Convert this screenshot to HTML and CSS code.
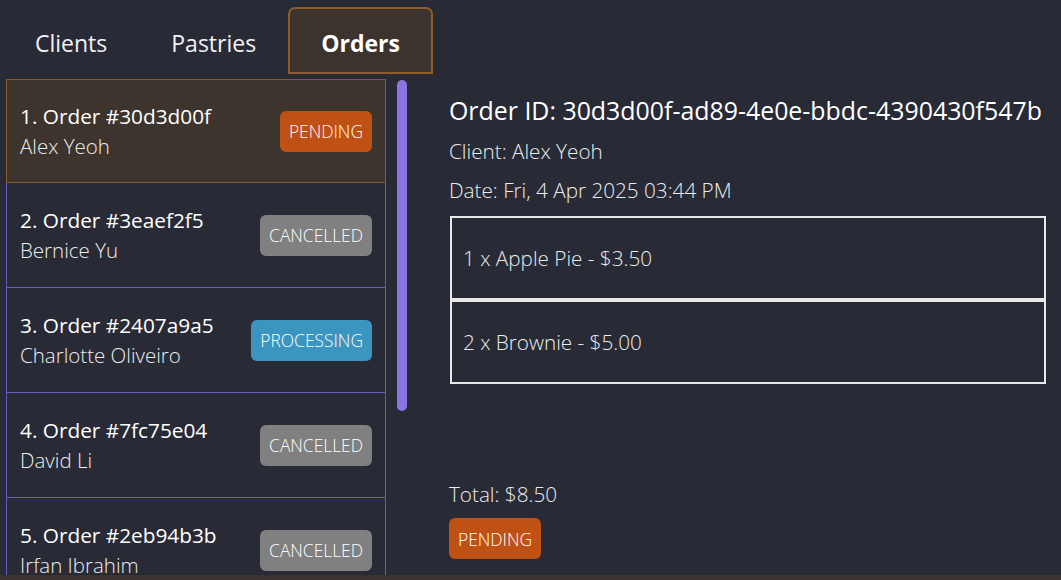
FILE: index.html
```html
<!DOCTYPE html>
<html>
<head>
<meta charset="utf-8">
<link rel="stylesheet" href="styles.css">
</head>
<body>
<div class="app">
  <div class="tabs">
    <div class="tab">Clients</div>
    <div class="tab">Pastries</div>
    <div class="tab active">Orders</div>
  </div>
  <div class="main">
    <div class="left">
      <div class="list">
        <div class="item selected">
          <div class="info"><div class="title">1. Order #30d3d00f</div><div class="sub">Alex Yeoh</div></div>
          <span class="badge pending">PENDING</span>
        </div>
        <div class="item">
          <div class="info"><div class="title">2. Order #3eaef2f5</div><div class="sub">Bernice Yu</div></div>
          <span class="badge cancelled">CANCELLED</span>
        </div>
        <div class="item">
          <div class="info"><div class="title">3. Order #2407a9a5</div><div class="sub">Charlotte Oliveiro</div></div>
          <span class="badge processing">PROCESSING</span>
        </div>
        <div class="item">
          <div class="info"><div class="title">4. Order #7fc75e04</div><div class="sub">David Li</div></div>
          <span class="badge cancelled">CANCELLED</span>
        </div>
        <div class="item">
          <div class="info"><div class="title">5. Order #2eb94b3b</div><div class="sub">Irfan Ibrahim</div></div>
          <span class="badge cancelled">CANCELLED</span>
        </div>
      </div>
      <div class="scrolltrack"><div class="thumb"></div></div>
    </div>
    <div class="detail">
      <div class="oid">Order ID: 30d3d00f-ad89-4e0e-bbdc-4390430f547b</div>
      <div class="line">Client: Alex Yeoh</div>
      <div class="line">Date: Fri, 4 Apr 2025 03:44 PM</div>
      <div class="lines">
        <div class="row">1 x Apple Pie - $3.50</div>
        <div class="row">2 x Brownie - $5.00</div>
      </div>
      <div class="line total">Total: $8.50</div>
      <div><span class="badge pending">PENDING</span></div>
    </div>
  </div>
  <div class="footer"></div>
</div>
</body>
</html>
```

FILE: styles.css
```css
html, body {
  margin: 0;
  padding: 0;
  background: #282a36;
  color: #ffffff;
  font-family: "Segoe UI", "Open Sans", "Noto Sans", sans-serif;
}
.app {
  width: 1061px;
  height: 580px;
  display: flex;
  flex-direction: column;
  overflow: hidden;
}
.tabs {
  height: 79px;
  display: flex;
  align-items: flex-start;
  padding-left: 3px;
  box-sizing: border-box;
  flex-shrink: 0;
}
.tab {
  margin-top: 7px;
  height: 67px;
  box-sizing: border-box;
  padding: 5px 32px 0;
  display: flex;
  align-items: center;
  font-size: 23px;
  font-weight: 400;
  color: #f2f2f2;
}
.tab.active {
  background: #3c332e;
  border: 2px solid #8f5d25;
  border-radius: 7px 7px 0 0;
  font-weight: 700;
  color: #ffffff;
  padding: 4px 31px 0;
}
.main {
  flex: 1;
  display: flex;
  min-height: 0;
}
.left {
  display: flex;
  padding-left: 6px;
  height: 100%;
}
.list {
  width: 380px;
  height: 100%;
  overflow: hidden;
}
.item {
  height: 105px;
  box-sizing: border-box;
  border: 1px solid #6a5bc2;
  border-top: none;
  display: flex;
  align-items: center;
  justify-content: space-between;
  padding: 0 13px 0 13px;
}
.item.selected {
  background: #3d342e;
  border: 1px solid #8a5a24;
  height: 104px;
}
.title {
  font-size: 20.8px;
  line-height: 30px;
  color: #ffffff;
}
.sub {
  font-size: 20.5px;
  line-height: 30px;
  font-weight: 300;
  color: #ededed;
}
.badge {
  display: inline-flex;
  align-items: center;
  height: 41px;
  padding: 0 9px;
  border-radius: 6px;
  font-size: 17.4px;
  font-weight: 300;
  color: #ffffff;
  box-sizing: border-box;
}
.pending { background: #c05115; }
.cancelled { background: #808080; }
.processing { background: #3a95c0; }
.scrolltrack {
  width: 10px;
  margin-left: 11px;
  padding-top: 1px;
}
.thumb {
  width: 10px;
  height: 331px;
  border-radius: 5px;
  background: #8a76e3;
}
.detail {
  flex: 1;
  padding-left: 42px;
  padding-top: 15px;
  padding-right: 15px;
  display: flex;
  flex-direction: column;
}
.oid {
  font-size: 24.9px;
  line-height: 32px;
  color: #ffffff;
}
.line {
  font-size: 20.7px;
  font-weight: 300;
  color: #ececec;
  line-height: 28px;
  margin-top: 11px;
}
.lines {
  margin-top: 12px;
  height: 264px;
  padding-left: 1px;
}
.row {
  height: 84px;
  box-sizing: border-box;
  border: 2px solid #e8e8e8;
  display: flex;
  align-items: center;
  padding-left: 11px;
  font-size: 20.7px;
  font-weight: 300;
  color: #ececec;
}
.total {
  margin-top: 0;
  margin-bottom: 10px;
}
.footer {
  height: 5px;
  background: #3b3330;
  flex-shrink: 0;
}
```
